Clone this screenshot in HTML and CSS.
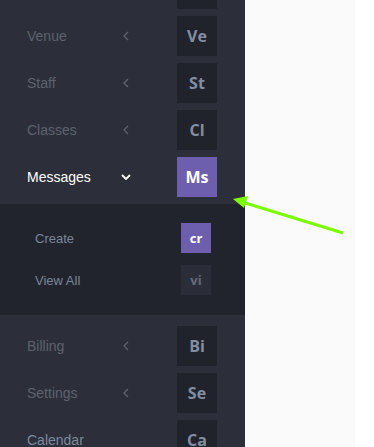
FILE: index.html
```html
<!DOCTYPE html>
<html>
<head>
<meta charset="utf-8">
<link rel="stylesheet" href="styles.css">
</head>
<body>
<div class="page">
  <nav class="sidebar">
    <div class="row first"><span class="label"></span><span class="chev"></span><span class="box"></span></div>
    <div class="row"><span class="label">Venue</span><span class="chev"><svg width="6" height="10" viewBox="0 0 6 10"><path d="M5 1 1 5l4 4" fill="none" stroke="#5d626d" stroke-width="1.3"/></svg></span><span class="box">Ve</span></div>
    <div class="row"><span class="label">Staff</span><span class="chev"><svg width="6" height="10" viewBox="0 0 6 10"><path d="M5 1 1 5l4 4" fill="none" stroke="#5d626d" stroke-width="1.3"/></svg></span><span class="box">St</span></div>
    <div class="row"><span class="label">Classes</span><span class="chev"><svg width="6" height="10" viewBox="0 0 6 10"><path d="M5 1 1 5l4 4" fill="none" stroke="#5d626d" stroke-width="1.3"/></svg></span><span class="box">Cl</span></div>
    <div class="row active"><span class="label">Messages</span><span class="chev down"><svg width="10" height="6" viewBox="0 0 10 6"><path d="M1 1l4 4 4-4" fill="none" stroke="#ffffff" stroke-width="1.8"/></svg></span><span class="box">Ms</span></div>
    <div class="submenu">
      <div class="subrow"><span class="sublabel">Create</span><span class="subbox on">cr</span></div>
      <div class="subrow"><span class="sublabel">View All</span><span class="subbox">vi</span></div>
    </div>
    <div class="row"><span class="label">Billing</span><span class="chev"><svg width="6" height="10" viewBox="0 0 6 10"><path d="M5 1 1 5l4 4" fill="none" stroke="#5d626d" stroke-width="1.3"/></svg></span><span class="box">Bi</span></div>
    <div class="row"><span class="label">Settings</span><span class="chev"><svg width="6" height="10" viewBox="0 0 6 10"><path d="M5 1 1 5l4 4" fill="none" stroke="#5d626d" stroke-width="1.3"/></svg></span><span class="box">Se</span></div>
    <div class="row hover"><span class="label">Calendar</span><span class="chev"></span><span class="box">Ca</span></div>
  </nav>
  <main class="content"></main>
</div>
<svg class="arrow" width="374" height="447" viewBox="0 0 374 447">
  <line x1="343" y1="233" x2="242" y2="202" stroke="#7cfc00" stroke-width="3"/>
  <path d="M233 199 L248 196 L244 208 Z" fill="#7cfc00"/>
</svg>
</body>
</html>
```
FILE: styles.css
```css
html, body {
  margin: 0;
  padding: 0;
  background: #ffffff;
  overflow: hidden;
  height: 447px;
}
.page {
  display: flex;
  height: 447px;
}
.sidebar {
  width: 245px;
  background: #2c2f3a;
  display: flex;
  flex-direction: column;
  font-family: "Liberation Sans", Arial, sans-serif;
  flex-shrink: 0;
}
.row {
  display: grid;
  grid-template-columns: 96px 54px 40px;
  align-items: center;
  height: 40px;
  padding-left: 27px;
  margin-bottom: 7px;
}
.row.first {
  margin-top: -31px;
}
.label {
  font-size: 14px;
  color: #5d626d;
  white-space: nowrap;
}
.chev {
  display: flex;
  align-items: center;
  height: 10px;
}
.chev svg { display: block; }
.chev.down { margin-left: -2px; }
.box {
  width: 40px;
  height: 40px;
  background: #20232b;
  color: #848da2;
  font-family: "Open Sans", sans-serif;
  font-weight: 700;
  font-size: 16px;
  display: flex;
  align-items: center;
  justify-content: center;
}
.row.active .label { color: #ffffff; }
.row.active .box { background: #6e5eae; color: #ffffff; }
.row.hover .label { color: #7d8a9e; }
.submenu {
  background: #21242d;
  padding: 19px 0 20px 35px;
  display: flex;
  flex-direction: column;
  gap: 12px;
  margin-bottom: 11px;
}
.subrow {
  display: grid;
  grid-template-columns: 146px 30px;
  align-items: center;
  height: 30px;
}
.sublabel {
  font-size: 13px;
  color: #7a879a;
}
.subbox {
  width: 30px;
  height: 30px;
  background: #2b2e38;
  color: #656b7c;
  font-family: "Open Sans", sans-serif;
  font-weight: 700;
  font-size: 13px;
  display: flex;
  align-items: center;
  justify-content: center;
}
.subbox.on { background: #6e5eae; color: #ffffff; }
.content {
  width: 110px;
  background: #fafafa;
  flex-shrink: 0;
}
.arrow {
  position: absolute;
  left: 0;
  top: 0;
  pointer-events: none;
}
```
